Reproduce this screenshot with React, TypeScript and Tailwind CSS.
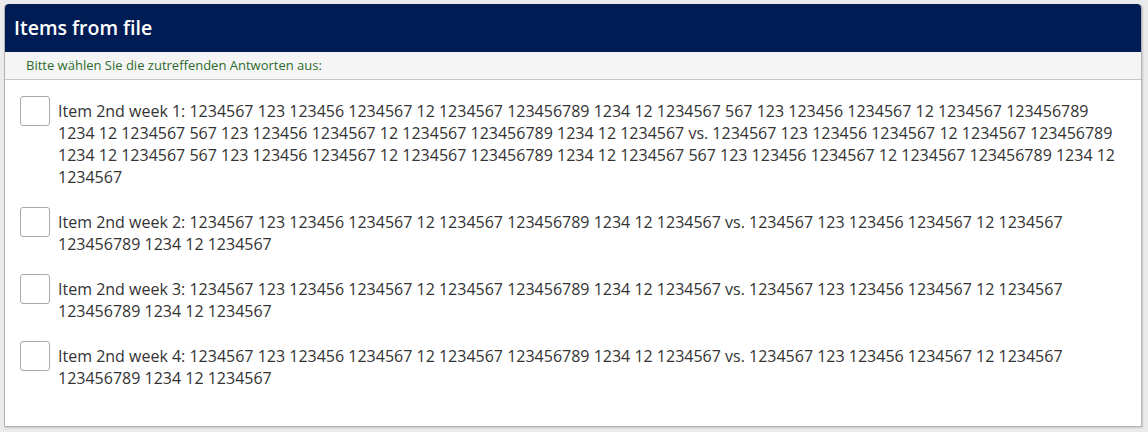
import React from 'react';

const items = [
    'Item 2nd week 1: 1234567 123 123456 1234567 12 1234567 123456789 1234 12 1234567 567 123 123456 1234567 12 1234567 123456789 1234 12 1234567 567 123 123456 1234567 12 1234567 123456789 1234 12 1234567 vs. 1234567 123 123456 1234567 12 1234567 123456789 1234 12 1234567 567 123 123456 1234567 12 1234567 123456789 1234 12 1234567 567 123 123456 1234567 12 1234567 123456789 1234 12 1234567',
    'Item 2nd week 2: 1234567 123 123456 1234567 12 1234567 123456789 1234 12 1234567 vs. 1234567 123 123456 1234567 12 1234567 123456789 1234 12 1234567',
    'Item 2nd week 3: 1234567 123 123456 1234567 12 1234567 123456789 1234 12 1234567 vs. 1234567 123 123456 1234567 12 1234567 123456789 1234 12 1234567',
    'Item 2nd week 4: 1234567 123 123456 1234567 12 1234567 123456789 1234 12 1234567 vs. 1234567 123 123456 1234567 12 1234567 123456789 1234 12 1234567',
];

function App() {
    const [checked, setChecked] = React.useState<boolean[]>(items.map(() => false));

    const toggle = (i: number) => {
        setChecked(checked.map((c, j) => (j === i ? !c : c)));
    };

    return (
        <div className="min-h-[432px] bg-[#ebebeb] p-[4px] font-['Open_Sans',sans-serif]">
            <div className="w-[1138px] rounded-t-[4px] border-r border-b border-l border-[#b4b4b4] bg-white shadow-[1px_1px_2px_rgba(0,0,0,0.15)]">
                <div className="flex h-[48px] items-center rounded-t-[4px] bg-[#001c54] px-[9px]">
                    <h1 className="text-[19.5px] font-semibold text-white">Items from file</h1>
                </div>
                <div className="flex h-[28px] items-center border-b border-[#c8c8c8] bg-[#f5f5f5] pl-[21px]">
                    <span className="text-[13px] text-[#2d6b2d]">Bitte wählen Sie die zutreffenden Antworten aus:</span>
                </div>
                <div className="flex flex-col gap-[23px] pt-[20px] pb-[37px] pl-[15px] pr-[24px]">
                    {items.map((text, i) => (
                        <label key={i} className="flex cursor-pointer items-start gap-[8px]">
                            <input
                                type="checkbox"
                                checked={checked[i]}
                                onChange={() => toggle(i)}
                                className="mt-[-4px] h-[30px] w-[30px] shrink-0 cursor-pointer appearance-none rounded-[3px] border border-[#a9a9a9] bg-white checked:bg-[#001c54]"
                            />
                            <span className="text-[16px] leading-[22px] text-[#333333]">{text}</span>
                        </label>
                    ))}
                </div>
            </div>
        </div>
    );
}

export default App;
